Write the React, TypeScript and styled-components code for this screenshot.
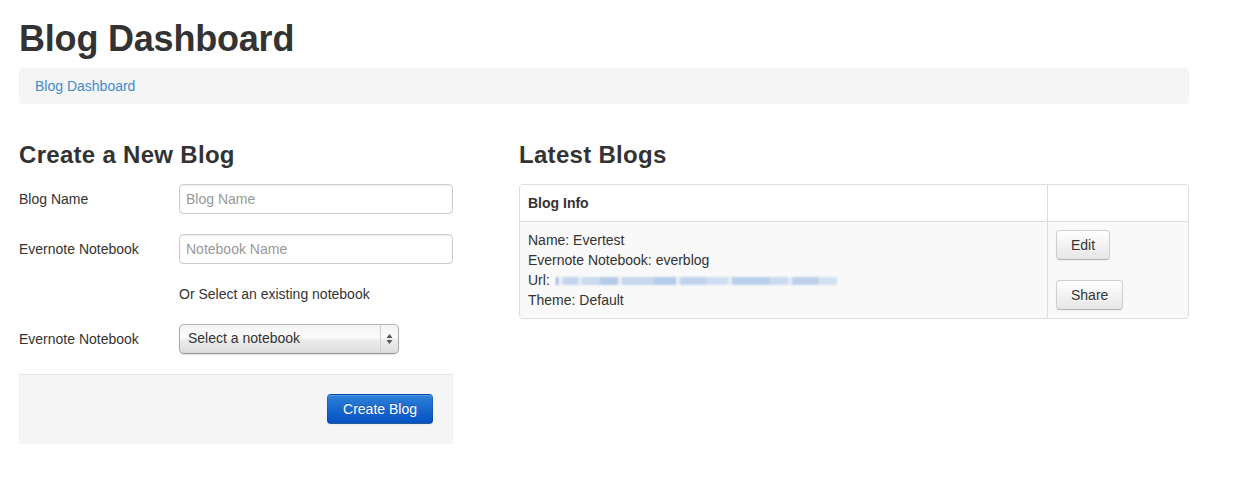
import React from "react";
import styled, { createGlobalStyle } from "styled-components";

const Global = createGlobalStyle`
  html, body { margin: 0; padding: 0; background: #fff; }
  body {
    font-family: "Liberation Sans", Arial, sans-serif;
    font-size: 14px;
    line-height: 20px;
    color: #333;
  }
  * { box-sizing: border-box; }
`;

const Container = styled.div`
  width: 1170px;
  margin-left: 19px;
`;

const Title = styled.h1`
  margin: 19px 0 9px;
  font-size: 36px;
  line-height: 39.6px;
  font-weight: bold;
  letter-spacing: -0.2px;
  color: #333;
`;

const Breadcrumb = styled.div`
  background: #f5f5f5;
  border-radius: 4px;
  padding: 8px 15px 8px 16px;
  margin-bottom: 20px;
  line-height: 20px;
`;

const Crumb = styled.a`
  color: #428bca;
  text-decoration: none;
`;

const Row = styled.div`
  display: flex;
  gap: 66px;
  align-items: flex-start;
`;

const LeftCol = styled.div`
  width: 434px;
`;

const RightCol = styled.div`
  width: 670px;
`;

const SectionTitle = styled.h3`
  margin: 18px 0 16px;
  font-size: 24px;
  line-height: 26.4px;
  font-weight: bold;
  letter-spacing: 0.3px;
  color: #333;
`;

const ControlGroup = styled.div`
  display: flex;
  margin-bottom: 20px;
`;

const Label = styled.label`
  width: 160px;
  padding-top: 5px;
  line-height: 20px;
`;

const Controls = styled.div<{ $offset?: boolean }>`
  margin-left: ${(p) => (p.$offset ? "160px" : "0")};
`;

const Input = styled.input`
  width: 274px;
  height: 30px;
  padding: 4px 6px;
  border: 1px solid #ccc;
  border-radius: 4px;
  font-family: inherit;
  font-size: 14px;
  color: #555;
  box-shadow: inset 0 1px 1px rgba(0, 0, 0, 0.075);
  outline: none;
  &::placeholder { color: #999; }
`;

const HelpText = styled.div`
  line-height: 20px;
`;

const SelectBox = styled.div`
  width: 220px;
  height: 30px;
  display: flex;
  border: 1px solid #aaa;
  border-color: #b5b5b5 #a9a9a9 #999 #a9a9a9;
  border-radius: 5px;
  background: linear-gradient(#f3f3f3 0%, #fbfbfb 45%, #ececec 55%, #dedede 100%);
  box-shadow: 0 1px 1px rgba(0, 0, 0, 0.12);
  overflow: hidden;
`;

const SelectText = styled.div`
  flex: 1;
  padding: 0 8px;
  line-height: 27px;
  color: #333;
  font-size: 14px;
`;

const SelectArrows = styled.div`
  width: 18px;
  border-left: 1px solid #cfcfcf;
  display: flex;
  align-items: center;
  justify-content: center;
`;

const FormActions = styled.div`
  margin-top: 0;
  background: #f5f5f5;
  border-top: 1px solid #e5e5e5;
  padding: 19px 20px 20px;
  display: flex;
  justify-content: flex-end;
`;

const Button = styled.button<{ $primary?: boolean }>`
  height: 30px;
  padding: 4px ${(p) => (p.$primary ? "15px" : "14px")};
  font-family: inherit;
  font-size: 14px;
  line-height: 20px;
  border-radius: 4px;
  cursor: pointer;
  color: ${(p) => (p.$primary ? "#fff" : "#333")};
  text-shadow: ${(p) =>
    p.$primary ? "0 -1px 0 rgba(0,0,0,0.25)" : "0 1px 1px rgba(255,255,255,0.75)"};
  background: ${(p) =>
    p.$primary
      ? "linear-gradient(#2f81d8, #0451c4)"
      : "linear-gradient(#ffffff, #e6e6e6)"};
  border: 1px solid
    ${(p) => (p.$primary ? "rgba(0,0,0,0.12)" : "#cfcfcf")};
  border-bottom-color: ${(p) => (p.$primary ? "rgba(0,0,0,0.3)" : "#b3b3b3")};
  box-shadow: inset 0 1px 0 rgba(255, 255, 255, 0.2), 0 1px 2px rgba(0, 0, 0, 0.05);
`;

const Table = styled.table`
  width: 670px;
  border-collapse: separate;
  border-spacing: 0;
  border: 1px solid #ddd;
  border-radius: 4px;
  overflow: hidden;
`;

const Th = styled.th<{ $side?: boolean }>`
  text-align: left;
  font-weight: bold;
  padding: 8px;
  line-height: 20px;
  background: #fff;
  vertical-align: top;
  width: ${(p) => (p.$side ? "141px" : "auto")};
  border-left: ${(p) => (p.$side ? "1px solid #ddd" : "none")};
`;

const Td = styled.td<{ $side?: boolean }>`
  padding: 8px;
  line-height: 20px;
  background: #f9f9f9;
  border-top: 1px solid #ddd;
  vertical-align: top;
  border-left: ${(p) => (p.$side ? "1px solid #ddd" : "none")};
`;

const ButtonStack = styled.div`
  display: flex;
  flex-direction: column;
  align-items: flex-start;
  gap: 20px;
`;

const Blurred = styled.span`
  display: inline-block;
  width: 281px;
  height: 8px;
  margin-left: 2px;
  vertical-align: 0px;
  filter: blur(1.1px);
  opacity: 0.85;
  background: linear-gradient(
    90deg,
    #7f9cc2 0 2px,
    #e3ebf6 2px 7px,
    #b9cfeb 7px 22px,
    #dfe8f5 22px 26px,
    #c2d5ee 26px 44px,
    #a9c3e6 44px 62px,
    #e6edf7 62px 66px,
    #bcd1ec 66px 98px,
    #aac4e7 98px 120px,
    #e8eef7 120px 124px,
    #b6cdeb 124px 150px,
    #c9daf0 150px 172px,
    #e4ecf6 172px 176px,
    #aec7e8 176px 214px,
    #c4d6ef 214px 232px,
    #e2eaf5 232px 236px,
    #b2caea 236px 262px,
    #cddcf0 262px 281px
  );
`;

function Arrows() {
  return (
    <svg width="7" height="12" viewBox="0 0 7 12">
      <path d="M3.5 1 L6.5 5 L0.5 5 Z" fill="#555" />
      <path d="M3.5 11 L6.5 7 L0.5 7 Z" fill="#555" />
    </svg>
  );
}

export default function App() {
  return (
    <>
      <Global />
      <Container>
        <Title>Blog Dashboard</Title>
        <Breadcrumb>
          <Crumb href="#">Blog Dashboard</Crumb>
        </Breadcrumb>
        <Row>
          <LeftCol>
            <SectionTitle>Create a New Blog</SectionTitle>
            <ControlGroup>
              <Label>Blog Name</Label>
              <Input placeholder="Blog Name" />
            </ControlGroup>
            <ControlGroup>
              <Label>Evernote Notebook</Label>
              <Input placeholder="Notebook Name" />
            </ControlGroup>
            <ControlGroup>
              <Controls $offset>
                <HelpText>Or Select an existing notebook</HelpText>
              </Controls>
            </ControlGroup>
            <ControlGroup>
              <Label>Evernote Notebook</Label>
              <SelectBox>
                <SelectText>Select a notebook</SelectText>
                <SelectArrows>
                  <Arrows />
                </SelectArrows>
              </SelectBox>
            </ControlGroup>
            <FormActions>
              <Button $primary>Create Blog</Button>
            </FormActions>
          </LeftCol>
          <RightCol>
            <SectionTitle>Latest Blogs</SectionTitle>
            <Table>
              <thead>
                <tr>
                  <Th>Blog Info</Th>
                  <Th $side></Th>
                </tr>
              </thead>
              <tbody>
                <tr>
                  <Td>
                    <div>Name: Evertest</div>
                    <div>Evernote Notebook: everblog</div>
                    <div>
                      Url: <Blurred />
                    </div>
                    <div>Theme: Default</div>
                  </Td>
                  <Td $side>
                    <ButtonStack>
                      <Button>Edit</Button>
                      <Button>Share</Button>
                    </ButtonStack>
                  </Td>
                </tr>
              </tbody>
            </Table>
          </RightCol>
        </Row>
      </Container>
    </>
  );
}
